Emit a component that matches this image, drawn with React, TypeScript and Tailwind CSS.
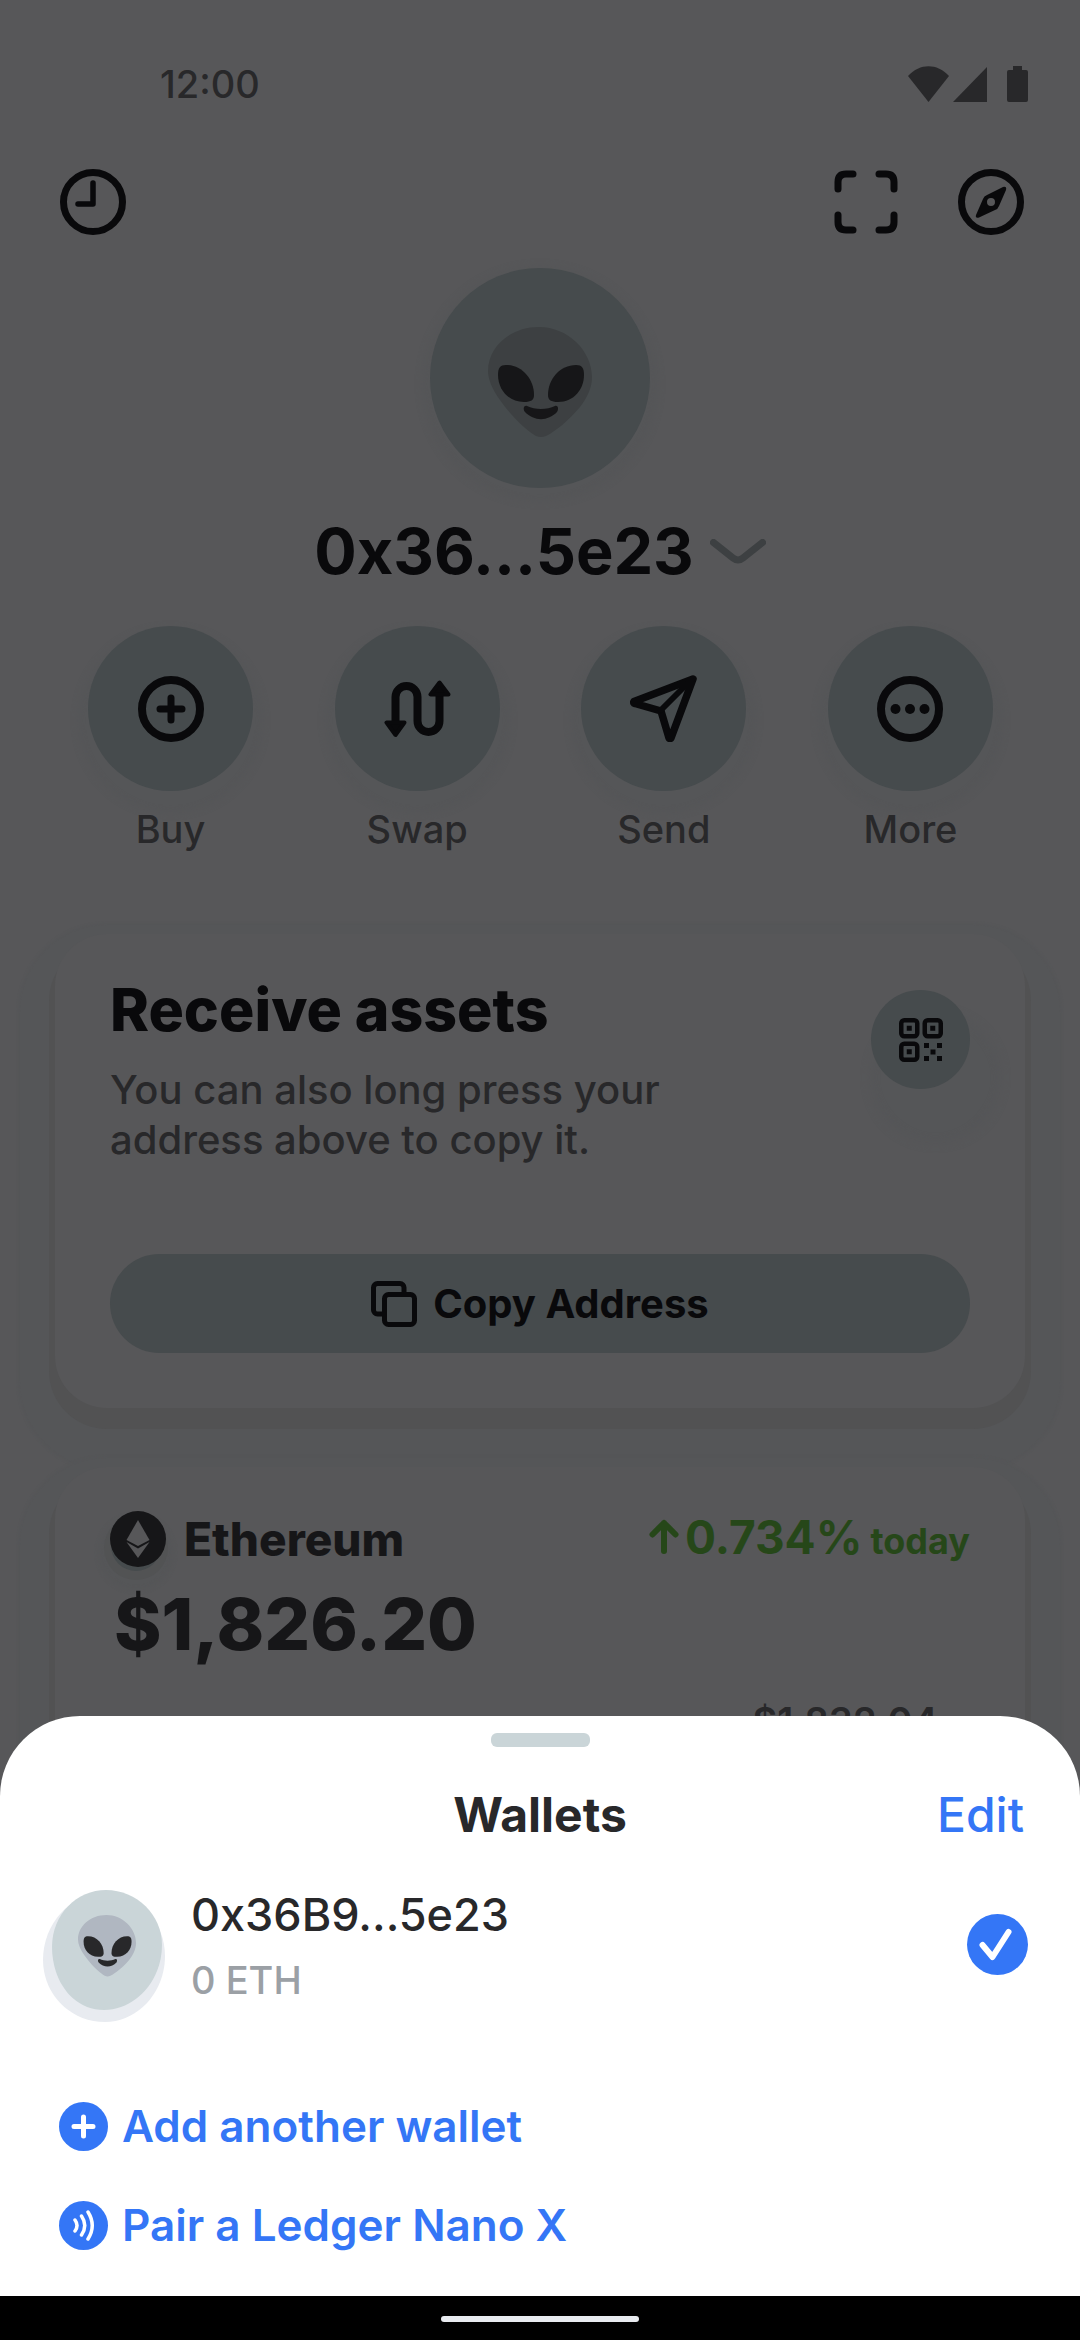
import type { ReactNode } from "react";

function AlienFace({ head, features }: { head: string; features: string }) {
  return (
    <>
      <path
        fill={head}
        d="M51 0C80 0 104 24 104 50C104 62 98 72 92 80C80 94 68 104 58 109Q53 111 48 109C38 103 24 90 12 73C4 62 0 52 0 44C0 20 22 0 51 0Z"
      />
      <path fill={features} d="M18 38C34 38 46 52 46 68C46 73 43 75 36 75C20 75 10 62 10 48C10 41 12 38 18 38Z" />
      <path fill={features} d="M88 38C72 38 60 52 60 68C60 73 63 75 70 75C86 75 96 62 96 48C96 41 94 38 88 38Z" />
      <path
        fill={features}
        d="M39 79C47 83 59 83 67 79C70 78 71 82 69 85C60 94.500 46 94.500 37 85C34.500 82 36 78 39 79Z"
      />
    </>
  );
}

function StatusBar() {
  return (
    <div className="flex h-12 items-center justify-between pl-[160px] pr-[52px] text-[#28282a]">
      <span className="text-[38px] font-medium leading-10">12:00</span>
      <div className="flex items-center" aria-hidden="true">
        <svg width="41" height="36" viewBox="0 0 41 36" fill="currentColor">
          <path d="M20.500 36L0 10C12-3 29-3 41 10Z" />
        </svg>
        <svg className="ml-1" width="34" height="35" viewBox="0 0 34 35" fill="currentColor">
          <path d="M34 0V35H0Z" />
        </svg>
        <svg className="ml-5" width="21" height="36" viewBox="0 0 21 36" fill="currentColor">
          <path d="M6 0h9v4h4a2 2 0 0 1 2 2v28a2 2 0 0 1-2 2H2a2 2 0 0 1-2-2V6a2 2 0 0 1 2-2h4Z" />
        </svg>
      </div>
    </div>
  );
}

function TopBar() {
  return (
    <header className="mt-[61px] flex items-center justify-between pl-[60px] pr-14 text-[#09090b]">
      <button type="button" aria-label="History">
        <svg width="66" height="66" viewBox="0 0 66 66" fill="none" stroke="currentColor" strokeLinecap="round" strokeLinejoin="round">
          <circle cx="33" cy="33" r="29.500" strokeWidth="7" />
          <path strokeWidth="5.500" d="M33 14V35H18" />
        </svg>
      </button>
      <div className="flex items-center gap-[60px]">
        <button type="button" aria-label="Scan">
          <svg width="64" height="64" viewBox="0 0 64 64" fill="none" stroke="currentColor" strokeWidth="7" strokeLinecap="round">
            <path d="M4 19V12Q4 4 12 4H19M45 4H52Q60 4 60 12V19M60 45V52Q60 60 52 60H45M19 60H12Q4 60 4 52V45" />
          </svg>
        </button>
        <button type="button" aria-label="Browser">
          <svg width="66" height="66" viewBox="0 0 66 66" fill="none">
            <circle cx="33" cy="33" r="29.500" stroke="currentColor" strokeWidth="7" />
            <path
              fill="currentColor"
              fillRule="evenodd"
              d="M45 18Q49 17 48 21L41 37Q40 40 37 41L21 48.500Q17 49.500 18 46L25 30Q26 27 29 26ZM33 29a4 4 0 1 0 0 8a4 4 0 1 0 0-8Z"
            />
          </svg>
        </button>
      </div>
    </header>
  );
}

function Action({ label, children }: { label: string; children: ReactNode }) {
  return (
    <button type="button" className="flex w-[165px] flex-col items-center gap-[18px]">
      <span className="flex size-[165px] items-center justify-center rounded-full bg-[#464b4d] text-[#09090b] shadow-[0_12px_6px_10px_#555658]">
        {children}
      </span>
      <span className="relative text-[38px] font-medium leading-10 text-[#28282a]">{label}</span>
    </button>
  );
}

function Actions() {
  return (
    <div className="mt-[43px] flex justify-between pl-[88px] pr-[87px]">
      <Action label="Buy">
        <svg width="66" height="66" viewBox="0 0 66 66" fill="none" stroke="currentColor" strokeLinecap="round">
          <circle cx="33" cy="33" r="29" strokeWidth="8" />
          <path strokeWidth="7" d="M33 22V44M22 33H44" />
        </svg>
      </Action>
      <Action label="Swap">
        <svg width="67" height="58" viewBox="0 0 67 58" fill="none" stroke="currentColor">
          <path strokeWidth="8" d="M11.500 44V17a11 11 0 0 1 22 0V41a11 11 0 0 0 22 0V14" />
          <path fill="currentColor" strokeWidth="4" strokeLinejoin="round" d="M2.500 42.500H20.500L11.500 55Z" />
          <path fill="currentColor" strokeWidth="4" strokeLinejoin="round" d="M46.500 14.500H64.500L55.500 2.500Z" />
        </svg>
      </Action>
      <Action label="Send">
        <svg width="67" height="67" viewBox="0 0 67 67" fill="none" stroke="currentColor" strokeLinejoin="round" strokeLinecap="round">
          <path strokeWidth="7.500" d="M63 4L4 26.500Q3 28 5 28.500L31 36L39 63Q40 64 41 63Z" />
          <path strokeWidth="6" d="M31 35L61 5" />
        </svg>
      </Action>
      <Action label="More">
        <svg width="66" height="66" viewBox="0 0 66 66" fill="currentColor">
          <circle cx="33" cy="33" r="29" fill="none" stroke="currentColor" strokeWidth="8" />
          <circle cx="18.500" cy="33" r="5" />
          <circle cx="33" cy="33" r="5" />
          <circle cx="47.500" cy="33" r="5" />
        </svg>
      </Action>
    </div>
  );
}

function ReceiveCard() {
  return (
    <section className="mx-[55px] mt-[85px] rounded-[52px] bg-[#575759] px-[55px] pb-[55px] pt-[47px] shadow-[0_15px_0_6px_#525253,0_26px_2px_37px_#555658]">
      <div className="flex items-start justify-between">
        <div>
          <h2 className="text-[59px] font-extrabold leading-[58px] text-[#09090b]">Receive assets</h2>
          <p className="mt-[26px] text-[40px] font-medium leading-[50px] text-[#28282a]">
            You can also long press your
            <br />
            address above to copy it.
          </p>
        </div>
        <button
          type="button"
          aria-label="Show QR code"
          className="mt-[9px] flex size-[99px] items-center justify-center rounded-full bg-[#464b4d] text-[#09090b] shadow-[15px_38px_8px_16px_#555658]"
        >
          <svg width="44" height="44" viewBox="0 0 44 44" fill="currentColor">
            <g fill="none" stroke="currentColor" strokeWidth="4.500">
              <rect x="2.250" y="2.250" width="16" height="16" rx="3" />
              <rect x="25.750" y="2.250" width="16" height="16" rx="3" />
              <rect x="2.250" y="25.750" width="16" height="16" rx="3" />
            </g>
            <path d="M7.750 7.750h5v5h-5ZM31.250 7.750h5v5h-5ZM7.750 31.250h5v5h-5ZM25 25h5v5h-5ZM38 25h5v5h-5ZM31.500 31.500h5v5h-5ZM25 38h5v5h-5ZM38 38h5v5h-5Z" />
          </svg>
        </button>
      </div>
      <button
        type="button"
        className="mt-[89px] flex h-[99px] w-full items-center justify-center gap-4 rounded-full bg-[#464b4d] text-[40px] font-bold leading-[50px] text-[#09090b]"
      >
        <svg width="46" height="46" viewBox="0 0 46 46" fill="none" stroke="currentColor" strokeWidth="5">
          <path d="M33 11V6.500a4 4 0 0 0-4-4H6.500a4 4 0 0 0-4 4V29a4 4 0 0 0 4 4H12" />
          <rect x="13.500" y="13.500" width="30" height="30" rx="4" />
        </svg>
        Copy Address
      </button>
    </section>
  );
}

function EthereumCard() {
  return (
    <section className="mx-[55px] mt-[59px] flex-1 rounded-t-[52px] bg-[#575759] px-[55px] pt-11 shadow-[0_15px_0_6px_#525253,0_26px_2px_37px_#555658]">
      <div className="flex h-14 items-center justify-between">
        <div className="flex items-center gap-[18px]">
          <span className="flex size-14 items-center justify-center rounded-full bg-[#161618] shadow-[-2px_7px_0_-3px_#464b4d,-2px_9px_0_4px_#525354,-2px_14px_4px_9px_#555658]">
            <svg width="24" height="38" viewBox="0 0 24 38" fill="#575759">
              <path d="M12 0L23.500 20L12 26L0.500 20Z" />
              <path d="M0.500 22L12 28.500L23.500 22L12 38Z" />
            </svg>
          </span>
          <h2 className="text-[46px] font-extrabold leading-[50px] text-[#161618]">Ethereum</h2>
        </div>
        <p className="flex items-baseline text-[46px] font-bold leading-[50px] text-[#264719]">
          <svg className="mr-1.5" width="30" height="35" viewBox="0 0 30 35" fill="none" stroke="currentColor" strokeWidth="6" strokeLinecap="round" strokeLinejoin="round">
            <path d="M15 32V4M3.500 15.500L15 4L26.500 15.500" />
          </svg>
          0.734%
          <span className="ml-2 text-[36px]">today</span>
        </p>
      </div>
      <p className="mt-[21px] pl-1 text-[72px] font-extrabold leading-[72px] text-[#161618]">$1,826.20</p>
      <p className="mt-[41px] pr-8 text-right text-[38px] font-semibold leading-10 text-[#28282a]">$1,832.04</p>
    </section>
  );
}

function WalletsSheet() {
  return (
    <div role="dialog" aria-label="Wallets" className="fixed inset-x-0 bottom-0">
      <div className="rounded-t-[80px] bg-white pb-[46px] pt-[17px]">
        <div className="mx-auto h-3.5 w-[99px] rounded-md bg-[#cad5d8]" />
        <div className="mt-11 grid grid-cols-3 items-center px-14 text-[48px] leading-[48px]">
          <h2 className="col-start-2 text-center font-bold text-[#28282a]">Wallets</h2>
          <button type="button" className="justify-self-end font-medium text-[#3476f6]">
            Edit
          </button>
        </div>

        <button type="button" className="mt-[51px] flex w-full items-start pl-[43px] pr-[52px] text-left">
          <svg width="122" height="132" viewBox="0 0 122 132">
            <path fill="#e8ebf0" d="M63 3C96 3 122 32 122 66C122 102 95 132 62 132C26 132 0 103 0 70C0 34 27 3 63 3Z" />
            <path fill="#cad5d8" d="M63 0C94 0 119 25 119 55C119 91 92 120 61 120C29 120 9 90 9 57C9 24 34 0 63 0Z" />
            <g transform="translate(35 25) scale(.558)">
              <AlienFace head="#b0b7c1" features="#28282a" />
            </g>
          </svg>
          <span className="ml-[26px] flex flex-1 flex-col gap-5">
            <span className="text-[45px] font-medium leading-[50px] text-[#28282a]">0x36B9...5e23</span>
            <span className="text-[38px] font-medium leading-10 text-[#9ba0a5]">0 ETH</span>
          </span>
          <svg className="mt-6" width="61" height="61" viewBox="0 0 61 61" fill="none">
            <circle cx="30.500" cy="30.500" r="30.500" fill="#3476f6" />
            <path d="M15.500 31L25.500 43L41.500 18" stroke="#fff" strokeWidth="6" strokeLinecap="round" strokeLinejoin="round" />
          </svg>
        </button>

        <div className="mt-20 flex flex-col items-start gap-[50px] pl-[59px] text-[44px] font-semibold leading-[49px] text-[#3476f6]">
          <button type="button" className="flex items-center gap-3.5">
            <svg width="49" height="49" viewBox="0 0 49 49" fill="none">
              <circle cx="24.500" cy="24.500" r="24.500" fill="#3476f6" />
              <path d="M24.500 15V34M15 24.500H34" stroke="#fff" strokeWidth="5" strokeLinecap="round" />
            </svg>
            Add another wallet
          </button>
          <button type="button" className="flex items-center gap-3.5">
            <svg width="49" height="49" viewBox="0 0 49 49" fill="none">
              <circle cx="24.500" cy="24.500" r="24.500" fill="#3476f6" />
              <path
                d="M16 19Q20 24.500 16 30M22.500 15Q29 24.500 22.500 34M29 11Q37.500 24.500 29 38"
                stroke="#fff"
                strokeWidth="3.500"
                strokeLinecap="round"
              />
            </svg>
            Pair a Ledger Nano X
          </button>
        </div>
      </div>
      <div className="flex h-11 items-center justify-center bg-black pt-0.5">
        <div className="h-1.5 w-[198px] rounded-full bg-[#e8ebf0]" />
      </div>
    </div>
  );
}

export default function App() {
  return (
    <div className="bg-[#575759] font-['Inter',sans-serif]">
      <main className="flex min-h-screen flex-col overflow-hidden pt-[60px]">
        <StatusBar />
        <TopBar />
        <div className="mt-[33px] flex size-[220px] items-center justify-center self-center rounded-full bg-[#464b4d] pt-2 shadow-[0_6px_6px_8px_#555658]">
          <svg width="104" height="110" viewBox="0 0 104 110">
            <AlienFace head="#3d4042" features="#161618" />
          </svg>
        </div>
        <button type="button" className="mt-[31px] flex items-center gap-4 self-center text-[63px] font-bold leading-[64px] text-[#09090b]">
          0x36...5e23
          <svg width="56" height="25" viewBox="0 0 56 25" fill="none" stroke="#3d4042" strokeWidth="7" strokeLinecap="round">
            <path d="M3.500 3.500L23 19Q28 23 33 19L52.500 3.500" />
          </svg>
        </button>
        <Actions />
        <ReceiveCard />
        <EthereumCard />
      </main>
      <WalletsSheet />
    </div>
  );
}
